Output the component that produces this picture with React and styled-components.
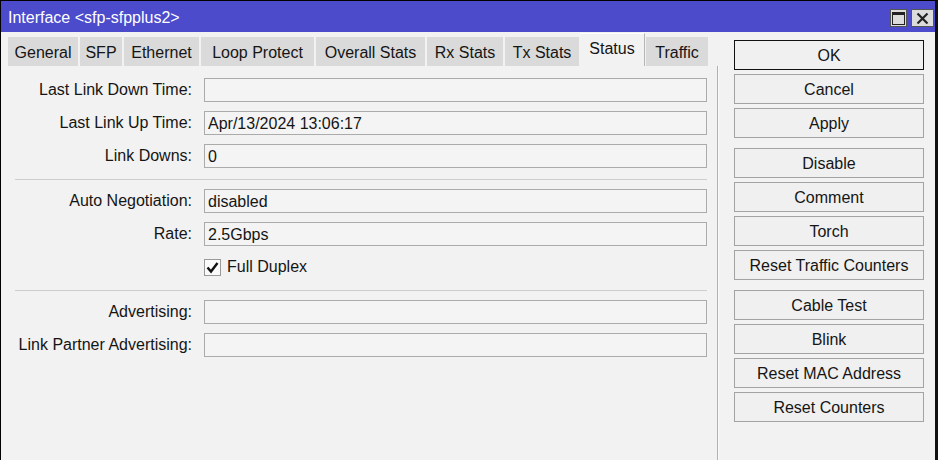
import React from 'react';
import styled, { createGlobalStyle } from 'styled-components';

const GlobalStyle = createGlobalStyle`
  html, body { margin: 0; padding: 0; background: #f2f2f2; }
  body { font-family: "Liberation Sans", Arial, sans-serif; font-size: 16px; color: #151515; }
`;

const tabs = [
  { name: 'General', w: 70 },
  { name: 'SFP', w: 42 },
  { name: 'Ethernet', w: 75 },
  { name: 'Loop Protect', w: 113 },
  { name: 'Overall Stats', w: 109 },
  { name: 'Rx Stats', w: 76 },
  { name: 'Tx Stats', w: 74 },
  { name: 'Status', w: 65, active: true },
  { name: 'Traffic', w: 62 },
];

const buttonGroups = [
  ['OK', 'Cancel', 'Apply'],
  ['Disable', 'Comment', 'Torch', 'Reset Traffic Counters'],
  ['Cable Test', 'Blink', 'Reset MAC Address', 'Reset Counters'],
];

export default function App() {
  return (
    <>
      <GlobalStyle />
      <Window>
        <TitleBar>
          <Title>Interface &lt;sfp-sfpplus2&gt;</Title>
          <TitleButtons>
            <TitleButton $w={17}>
              <svg width="13" height="13" viewBox="0 0 13 13">
                <rect x="0.5" y="0.5" width="12" height="12" fill="none" stroke="#222" />
                <rect x="0" y="0" width="13" height="3" fill="#222" />
              </svg>
            </TitleButton>
            <TitleButton $w={23}>
              <svg width="13" height="13" viewBox="0 0 13 13">
                <path d="M1.5 1.5 L11.5 11.5 M11.5 1.5 L1.5 11.5" stroke="#222" strokeWidth="2.2" />
              </svg>
            </TitleButton>
          </TitleButtons>
        </TitleBar>
        <Body>
          <LeftPane>
            <TabBar>
              {tabs.map(t => (
                <Tab key={t.name} $w={t.w} $active={t.active}>{t.name}</Tab>
              ))}
            </TabBar>
            <Panel>
              <Form>
                <Row>
                  <Label>Last Link Down Time:</Label>
                  <Field />
                </Row>
                <Row>
                  <Label>Last Link Up Time:</Label>
                  <Field>Apr/13/2024 13:06:17</Field>
                </Row>
                <Row>
                  <Label>Link Downs:</Label>
                  <Field>0</Field>
                </Row>
                <Separator />
                <Row>
                  <Label>Auto Negotiation:</Label>
                  <Field>disabled</Field>
                </Row>
                <Row>
                  <Label>Rate:</Label>
                  <Field>2.5Gbps</Field>
                </Row>
                <Row>
                  <Label />
                  <CheckWrap>
                    <CheckBox>
                      <svg width="13" height="13" viewBox="0 0 13 13">
                        <path d="M1.5 6.5 L5 10.5 L11.5 2" fill="none" stroke="#111" strokeWidth="2.4" />
                      </svg>
                    </CheckBox>
                    Full Duplex
                  </CheckWrap>
                </Row>
                <Separator />
                <Row>
                  <Label>Advertising:</Label>
                  <Field />
                </Row>
                <Row>
                  <Label>Link Partner Advertising:</Label>
                  <Field />
                </Row>
              </Form>
            </Panel>
          </LeftPane>
          <ButtonColumn>
            {buttonGroups.map((group, gi) => (
              <ButtonGroup key={gi}>
                {group.map(b => (
                  <DialogButton key={b} $default={b === 'OK'}>{b}</DialogButton>
                ))}
              </ButtonGroup>
            ))}
          </ButtonColumn>
        </Body>
      </Window>
    </>
  );
}

const Window = styled.div`
  height: 460px;
  box-sizing: border-box;
  border-left: 1px solid #000;
  border-top: 1px solid #000;
  border-right: 3px solid #111;
  background: #f2f2f2;
  display: flex;
  flex-direction: column;
  overflow: hidden;
`;

const TitleBar = styled.div`
  height: 31px;
  flex: none;
  background: #4b4bcb;
  color: #fff;
  display: flex;
  align-items: center;
  justify-content: space-between;
  padding: 0 1px 0 7px;
`;

const Title = styled.div`
  font-size: 16px;
  padding-top: 2px;
`;

const TitleButtons = styled.div`
  display: flex;
  gap: 4px;
  padding-top: 3px;
`;

const TitleButton = styled.div`
  width: ${p => p.$w}px;
  height: 18px;
  box-sizing: border-box;
  background: #dcdcdc;
  border: 1px solid #555;
  display: flex;
  align-items: center;
  justify-content: center;
`;

const Body = styled.div`
  flex: 1;
  display: flex;
  min-height: 0;
`;

const LeftPane = styled.div`
  width: 717px;
  flex: none;
  display: flex;
  flex-direction: column;
`;

const TabBar = styled.div`
  display: flex;
  align-items: flex-end;
  gap: 2px;
  padding: 1px 0 0 7px;
  height: 34px;
  box-sizing: border-box;
  flex: none;
`;

const Tab = styled.div`
  width: ${p => p.$w}px;
  height: ${p => (p.$active ? 33 : 29)}px;
  box-sizing: border-box;
  display: flex;
  align-items: center;
  justify-content: center;
  padding: ${p => (p.$active ? '0 0 3px' : '2px 0 0')};
  background: ${p => (p.$active ? '#f2f2f2' : '#dadada')};
  border-right: ${p => (p.$active ? '1px solid #b5b5b5' : 'none')};
  border-top: ${p => (p.$active ? '1px solid #ffffff' : 'none')};
  margin: ${p => (p.$active ? '0 -1px 0 -1px' : '0')};
  white-space: nowrap;
`;

const Panel = styled.div`
  flex: 1;
  border-right: 1px solid #b0b0b0;
  box-shadow: 1px 0 0 #fafafa;
  padding: 12px 10px 0 7px;
`;

const Form = styled.div`
  display: flex;
  flex-direction: column;
  gap: 9px;
`;

const Row = styled.div`
  display: flex;
  align-items: center;
  height: 24px;
  gap: 12px;
`;

const Label = styled.div`
  width: 184px;
  flex: none;
  text-align: right;
  white-space: nowrap;
`;

const Field = styled.div`
  width: 503px;
  height: 24px;
  box-sizing: border-box;
  border: 1px solid #ababab;
  background: #f4f4f4;
  padding: 1px 4px 0 3px;
  display: flex;
  align-items: center;
`;

const Separator = styled.div`
  height: 1px;
  background: #cdcdcd;
  margin: 2px 0 0 7px;
  width: 692px;
`;

const CheckWrap = styled.label`
  display: flex;
  align-items: center;
  gap: 6px;
`;

const CheckBox = styled.span`
  width: 17px;
  height: 17px;
  box-sizing: border-box;
  border: 1px solid #9a9a9a;
  background: #fafafa;
  display: flex;
  align-items: center;
  justify-content: center;
`;

const ButtonColumn = styled.div`
  display: flex;
  flex-direction: column;
  gap: 10px;
  padding: 8px 0 0 16px;
`;

const ButtonGroup = styled.div`
  display: flex;
  flex-direction: column;
  gap: 4px;
`;

const DialogButton = styled.div`
  width: 190px;
  height: 30px;
  box-sizing: border-box;
  border: 1px solid ${p => (p.$default ? '#111' : '#a3a3a3')};
  background: #f0f0f0;
  display: flex;
  align-items: center;
  justify-content: center;
  padding-top: 1px;
  white-space: nowrap;
`;
